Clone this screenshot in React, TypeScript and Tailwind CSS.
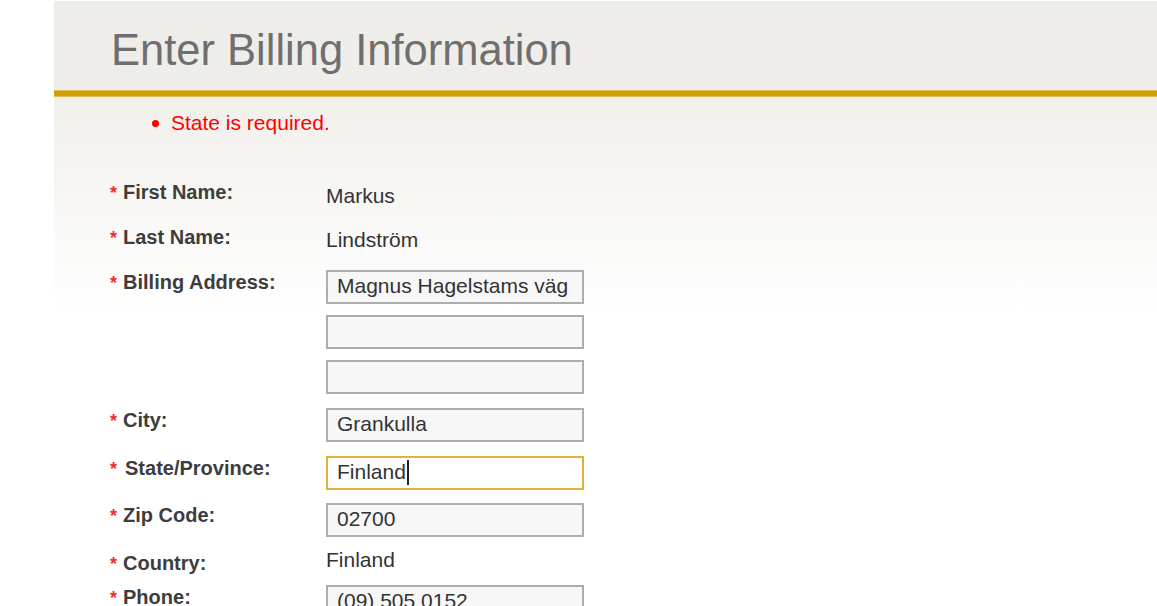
import React from 'react';

type RowProps = {
  label: string;
  children?: React.ReactNode;
  className?: string;
  labelClassName?: string;
  gapClassName?: string;
};

function Row({ label, children, className = '', labelClassName = '', gapClassName = 'ml-[6px]' }: RowProps) {
  return (
    <div className={`grid grid-cols-[216px_258px] ${className}`}>
      <div className={`text-[20px] leading-[24px] font-bold text-[#3d3d3d] whitespace-nowrap ${labelClassName}`}>
        <span className="text-[#e8302c] text-[18px]">*</span>
        <span className={gapClassName}>{label}</span>
      </div>
      <div>{children}</div>
    </div>
  );
}

function Field({ value = '', focused = false }: { value?: string; focused?: boolean }) {
  return (
    <div
      className={`h-[34px] w-[258px] border-2 pl-[9px] text-[21px] leading-[28px] text-[#333] whitespace-nowrap overflow-hidden ${
        focused ? 'border-[#e2b13a] bg-white' : 'border-[#adadad] bg-[#f7f7f7]'
      }`}
    >
      {value}
      {focused && <span className="inline-block w-[2px] h-[25px] bg-[#222] align-[-6px] ml-px" />}
    </div>
  );
}

export default function App() {
  return (
    <div className="min-h-screen bg-white pt-px pl-[54px] font-['Liberation_Sans',Arial,sans-serif]">
      {/* Title bar */}
      <header className="h-[89px] bg-[#efede9] pl-[57px] pt-[25px]">
        <h1 className="text-[43.5px] leading-[48px] text-[#6f6f6f] font-normal">
          Enter Billing Information
        </h1>
      </header>
      <div className="h-[7px] bg-[#d29e06] border-y border-[#e0bc5c]" />

      <div className="bg-[linear-gradient(to_bottom,#f1efea_0px,#ffffff_215px)] pl-[56px] pt-[14px] pb-10">
        {/* Errors */}
        <div className="flex items-center ml-[42px] h-[24px]">
          <span className="w-[7px] h-[7px] rounded-full bg-[#ff0000]" />
          <span className="ml-[12px] text-[21px] leading-[24px] text-[#ff0000]">State is required.</span>
        </div>

        {/* Form */}
        <div className="mt-[45px]">
          <Row label="First Name:" className="h-[45px]">
            <div className="pt-[4px] text-[21px] leading-[24px] text-[#333]">Markus</div>
          </Row>
          <Row label="Last Name:" className="h-[45px]">
            <div className="pt-[3px] text-[21px] leading-[24px] text-[#333]">Lindström</div>
          </Row>
          <Row label="Billing Address:" className="pb-[14px]">
            <div className="flex flex-col gap-[11px]">
              <Field value="Magnus Hagelstams väg" />
              <Field />
              <Field />
            </div>
          </Row>
          <Row label="City:" className="h-[48px]">
            <Field value="Grankulla" />
          </Row>
          <Row label="State/Province:" className="h-[47px]" gapClassName="ml-[8px]">
            <Field value="Finland" focused />
          </Row>
          <Row label="Zip Code:" className="h-[45px]">
            <Field value="02700" />
          </Row>
          <Row label="Country:" className="h-[37px]" labelClassName="pt-[3px]">
            <div className="text-[21px] leading-[24px] text-[#333]">Finland</div>
          </Row>
          <Row label="Phone:" className="h-[40px]">
            <Field value="(09) 505 0152" />
          </Row>
        </div>
      </div>
    </div>
  );
}
